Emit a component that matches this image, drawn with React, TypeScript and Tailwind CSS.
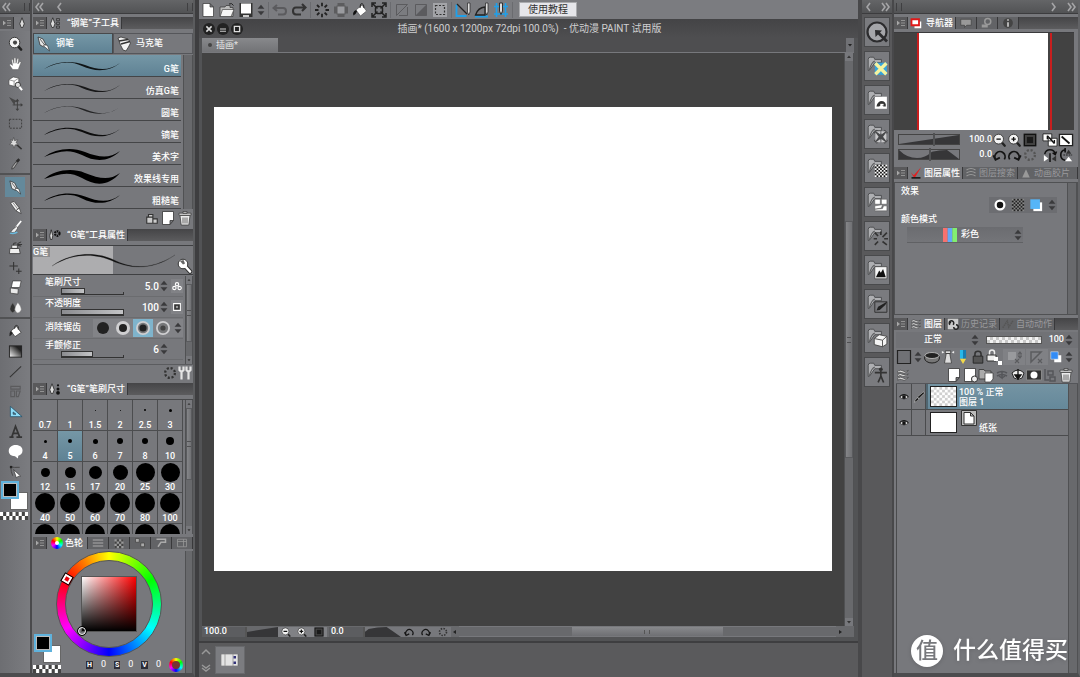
import React, { useState } from 'react';
import clsx from 'clsx';

type Kids = { children?: React.ReactNode };

const Svg: React.FC<Kids & { className?: string; box?: string; stretch?: boolean }> = ({ children, className = 'w-4 h-4', box = '0 0 16 16', stretch }) => (
  <svg viewBox={box} className={clsx('block shrink-0', className)} preserveAspectRatio={stretch ? 'none' : undefined} fill="none" aria-hidden="true">
    {children}
  </svg>
);

const Checks: React.FC<{ x: number; y: number; cols: number; rows: number; s: number; a?: string; b?: string }> = ({ x, y, cols, rows, s, a = '#fff', b = '#333' }) => (
  <>
    <rect x={x} y={y} width={cols * s} height={rows * s} fill={a} />
    {Array.from({ length: cols * rows }, (_, i) => i)
      .filter((i) => ((i % cols) + Math.floor(i / cols)) % 2 === 1)
      .map((i) => (
        <rect key={i} x={x + (i % cols) * s} y={y + Math.floor(i / cols) * s} width={s} height={s} fill={b} />
      ))}
  </>
);

const trash = (
  <>
    <path d="M3 5.5h10l-1.2 9.5H4.2z" fill="#ececec" stroke="#333" strokeWidth=".7" />
    <path d="M6 7.5v6M8 7.5v6M10 7.5v6" stroke="#444" strokeWidth=".8" />
    <path d="M2 3.2h12v2H2zM6 1.5h4v1.8H6z" fill="#eee" stroke="#333" strokeWidth=".7" />
  </>
);
const page = <path d="M2.5 1.5h11v9l-3.5 4H2.5z M13.5 10.5H10v4" fill="#fff" stroke="#333" strokeWidth=".8" />;
const pen = (
  <>
    <path d="M2 1l5 2 3 6-2 2-4-2z" fill="#e8e8e8" stroke="#333" strokeWidth=".8" />
    <path d="M8.5 8.5l3 1 2 5.5-4-3.5-2-1.5z" fill="#fff" stroke="#333" strokeWidth=".7" />
    <path d="M4 3l5 6.5" stroke="#444" strokeWidth=".8" />
  </>
);
const magnifier = (inner: React.ReactNode) => (
  <>
    <path d="M10 10l4 4.5" stroke="#222" strokeWidth="2.6" strokeLinecap="round" />
    <circle cx="7" cy="7" r="5.6" fill="#f3f3f3" stroke="#333" strokeWidth="1" />
    {inner}
  </>
);
const gear = (c: string) => <circle cx="8" cy="8" r="5.6" stroke={c} strokeWidth="2.6" strokeDasharray="2.4 2" />;
const rotL = <path d="M4 13.5A5.800 5.800 0 1 1 13.500 13M.8 8.500l2.600 5 5-2.500" stroke="#151515" strokeWidth="2" />;
const rotR = <path d="M12 13.500A5.800 5.800 0 1 0 2.500 13M15.200 8.500l-2.600 5-5-2.500" stroke="#151515" strokeWidth="2" />;
const stack = (
  <path d="M2 3.5q3-2 6 0t6-.8l-2 2.4q-3 1.5-5.500 0T2 6zM2 7.500q3-2 6 0t6-.8l-2 2.4q-3 1.500-5.500 0T2 10zM2 11.500q3-2 6 0t6-.8l-2 2.400q-3 1.500-5.500 0T2 14z" fill="#f0f0f0" stroke="#333" strokeWidth=".7" />
);
const fitBox = (
  <>
    <rect x="1.500" y="1.500" width="13" height="13" fill="#444" stroke="#111" strokeWidth="1.600" />
    <rect x="4.500" y="4.500" width="7" height="7" fill="#1a1a1a" />
  </>
);
const upDown = <path d="M8 2l4 4.500H4zM8 14l4-4.500H4z" fill="#3a3a3c" />;

const toolGroups: [string, React.ReactNode][][] = [
  [
    ['放大镜', magnifier(<circle cx="7.500" cy="7" r="2.200" fill="#444" />)],
    ['移动', <path d="M5 14.500L1.500 9.500l1.300-1 2 1.500-1-6.200 1.500-.3 1 4.300.2-6h1.700l.3 5.900 1.500-5.200 1.500.4-1 5.500 2.200-2.600 1.300.8-2.400 6-.6 1.900z" fill="#fff" stroke="#555" strokeWidth=".5" />],
    ['操作', <><path d="M1 4l4.500-3 6 1.200v6L6.500 11 1 9.500z" fill="#fff" stroke="#444" strokeWidth=".7" /><path d="M1 4l5.500 1.500V11M6.500 5.500l5-3.200" stroke="#666" strokeWidth=".7" /><circle cx="10.500" cy="9.500" r="2.800" fill="#ddd" stroke="#333" /><path d="M12 11.500l3 3.500" stroke="#fff" strokeWidth="2.200" /></>],
    ['移动图层', <><path d="M1 1l6 9 .6-3.600L11 6z" fill="#484848" /><path d="M10 4.500v10M5 9.500h10" stroke="#3f3f3f" /><path d="M10 3l2 2.500H8zM10 16l2-2.500H8zM16 9.500L13.500 7.500v4z" fill="#3f3f3f" /></>],
    ['选择范围', <rect x="1.500" y="3.500" width="13" height="9.500" stroke="#3c3c3c" strokeDasharray="2 1.300" />],
    ['自动选择', <><path d="M8.500 8.500l6 5.500" stroke="#333" strokeWidth="1.600" /><path d="M6 1.500l1 3.500 3.500-1-2 3 2.500 2-3.500.5L6.500 13 5.200 9.500 1.500 9 4 6.800 2.500 4 5 5z" fill="#dcdcdc" stroke="#444" strokeWidth=".6" /></>],
    ['吸管', <><path d="M11 2.500l2 1.700-2.500 3-2.300-2z" fill="#2c2c2c" /><path d="M8.600 6L4.500 11.500 4 14l2.400-1.200L10 7.300z" fill="#aaa" stroke="#333" strokeWidth=".8" /></>],
  ],
  [
    ['钢笔', pen],
    ['铅笔', <><path d="M2.500 3l4-1.500 5.500 7-3.500 3z" fill="#eee" stroke="#333" strokeWidth=".7" /><path d="M8.500 11.500l3.500-3 2 6z" fill="#fff" stroke="#333" strokeWidth=".7" /><path d="M5 2.500l5.500 7.300" stroke="#888" /></>],
    ['毛笔', <><path d="M14 1L8 8.500" stroke="#fff" strokeWidth="1.800" /><path d="M9 7l1.500 1.500L7.500 13l-5 .5L5 10z" fill="#f2f2f2" stroke="#333" strokeWidth=".6" /><path d="M2 14q5 1 8-1" stroke="#69b9dd" strokeWidth="1.600" /></>],
    ['喷枪', <><path d="M2 9h10l1 5.500H1.500zM4 5.500h6V9H4z" fill="#efefef" stroke="#333" strokeWidth=".8" /><path d="M6 5.500V3.500l3-.5M10 4l4-2M10 5.500l4 1M10 4.800h5" stroke="#333" /></>],
    ['花纹', <path d="M6 2v9M1.500 6.500h9M11.500 9v6M8.500 12h6" stroke="#333" strokeWidth="1.100" />],
    ['橡皮擦', <><path d="M5 1h9l-1.500 7H3.500z" fill="#fff" stroke="#333" strokeWidth=".7" /><path d="M2.500 8.500l8.500 1-.5 5.500-8-1z" fill="#e9e9e9" stroke="#333" strokeWidth=".7" /></>],
    ['混合', <><path d="M5 3q6 8 0 10.500Q-1 11 5 3z" fill="#333" stroke="#777" strokeWidth=".5" /><path d="M10.500 2.500q7.500 9 0 11.500Q4 11.500 10.500 2.500z" fill="#f5f5f5" stroke="#555" strokeWidth=".5" /></>],
  ],
  [
    ['填充', <><path d="M3 7.500l6-5 5 6.500-6.500 4.500z" fill="#fff" stroke="#333" strokeWidth=".8" /><path d="M3 7.500q-2 2-1.500 5.500Q4 12 5 9.500z" fill="#222" /><path d="M7 5q0-4 2.500-3.500T11 6" stroke="#333" /></>],
    ['渐变', <><defs><linearGradient id="toolGradient" x1="0" y1="1" x2="1" y2="0"><stop stopColor="#fff" /><stop offset=".75" stopColor="#222" /></linearGradient></defs><rect x="1.500" y="2" width="13" height="12" fill="url(#toolGradient)" stroke="#222" /></>],
    ['直线', <path d="M2 14L14 2.500" stroke="#333" strokeWidth="1.100" />],
    ['分格', <path d="M3 2.500h10v3H3zM3 7.500h4v6H3zM9 7.500h4l-2 6H9z" stroke="#5b5b5d" strokeWidth="1.200" />],
    ['尺子', <path d="M2.500 2.500v11h12.500zM5.500 8.500v2.400h3z" fill="#8fdcf7" stroke="#1f4b63" strokeWidth=".8" fillRule="evenodd" />],
    ['文字', <path d="M1.500 14h4.500M9 14h6M4 14L8 2.500 12.500 14M5.500 10h5" stroke="#353535" strokeWidth="1.800" />],
    ['对话框', <path d="M8 1c5 0 7.500 2.500 7.500 6 0 3-2 4.800-4.500 5.400l-.5 3.100L7.500 13C3 13 .8 10.500.8 7.500.8 3.500 4 1 8 1z" fill="#fff" />],
    ['线修正', <><path d="M3 3q3 1 9.500.5M3 3q0 5 2 9.500" stroke="#444" /><path d="M6 6l7.500 7-3 .2L9 15z" fill="#fff" stroke="#333" strokeWidth=".7" /><path d="M2 2h2.500v2.500H2z" fill="#222" /></>],
  ],
];

const arrowsX = <path d="M2 2l4.500 4.500M14 2L9.500 6.500M2 14l4.500-4.500M14 14L9.500 9.500M1 5V1h4M11 1h4v4M1 11v4h4M15 11v4h-4" stroke="#222" strokeWidth="1.500" />;
const topGroups: [string, React.ReactNode][][] = [
  [
    ['新建', <path d="M3 1.500h7l3.500 3.500v9.500H3zM10 1.500V5h3.500" fill="#fff" stroke="#333" strokeWidth=".7" />],
    ['打开', <><path d="M1 5h5l1-1.500h4v2h3v9H1z" fill="#bbb" stroke="#333" strokeWidth=".7" /><path d="M3.500 7.500H15l-3 7H1.200z" fill="#f5f5f5" stroke="#333" strokeWidth=".6" /><path d="M10 2q3-1.500 4.500 1.500" stroke="#222" /></>],
    ['保存', <><path d="M1.500 1h13v14h-13z" fill="#333" /><path d="M3 1.500h10v10H3z" fill="#fff" /><path d="M5 13h6v2H5z" fill="#ccc" /></>],
  ],
  [
    ['撤消', <path d="M5 3L1.500 6 5 9M2 6h9q3 0 3 3.200T11 12.500H6" stroke="#5b5b5e" strokeWidth="2" />],
    ['重做', <path d="M11 2L14.500 5.500 11 9M14 5.500H5Q2 5.500 2 9t3 3.500h5" stroke="#333" strokeWidth="2.100" />],
  ],
  [
    ['清除', <path d="M8 .8v3.500M8 11.800v3.500M1 8h3.500M11.500 8H15M3 3l2.400 2.400M13 3l-2.400 2.400M3 13l2.400-2.400M13 13l-2.400-2.400" stroke="#222" strokeWidth="1.800" />],
    ['清除选择范围外', <><path d="M8 1v14M1 8h14" stroke="#5c5c5e" strokeWidth="7" /><rect x="4" y="4" width="8" height="8" fill="#9a9b9f" stroke="#5c5c5e" /></>],
    ['填充', <><path d="M4 8l6-5 4.500 6-6 5z" fill="#fff" stroke="#444" strokeWidth=".6" /><path d="M4 8Q0 10 1.500 13.500 4 12 5 9.500z" fill="#111" /><path d="M8 6q0-5 2-4.500T12 6" stroke="#222" /></>],
    ['放大缩小旋转', <><rect x="4.500" y="4.500" width="7" height="7" rx="2" stroke="#222" strokeWidth="1.500" fill="#7b7c80" />{arrowsX}</>],
  ],
  [
    ['取消选择', <path d="M2.500 13.500v-11h11M13.500 5v8.500H5M13.500 2.500l-11 11" stroke="#5b5b5e" />],
    ['反转选择', <><path d="M13.500 2.500v11h-11z" fill="#5b5b5e" /><path d="M2.500 2.500h11v11h-11z" stroke="#5b5b5e" /></>],
    ['选择边界', <><path d="M1 1h14v14H1z" fill="#a3a4a8" /><path d="M3.500 3.500h9v9h-9z" stroke="#333" strokeDasharray="2 1.500" strokeWidth="1.200" /></>],
  ],
  [
    ['吸附尺子', <><path d="M1.500 2.500V14h10" stroke="#1fa0ea" strokeWidth="1.800" /><path d="M2 2l10 10" stroke="#222" strokeWidth="1.300" /><path d="M12.500 1h2.500v9l-1.300 3-1.200-3z" fill="#ddd" stroke="#222" strokeWidth=".7" /></>],
    ['吸附特殊尺子', <><path d="M1 13.500h13V15.500H1z" fill="#1fa0ea" /><path d="M1.500 13Q4 5.500 11 5v8z" stroke="#222" strokeWidth="1.300" /><path d="M11.500 1H14v9l-1.300 3-1.200-3z" fill="#ddd" stroke="#222" strokeWidth=".7" /></>],
    ['吸附网格', <><path d="M3.500 1v14M12.500 1v14M1 4.500h14M1 12h14" stroke="#1fa0ea" strokeWidth="1.600" /><path d="M6.500 1h3v8L8 12.500 6.500 9z" fill="#ddd" stroke="#222" strokeWidth=".9" /></>],
  ],
];

const materials: [string, React.ReactNode][] = [
  ['彩色图案', <><path d="M8 7h11v11H8z" fill="#35a4dc" /><path d="M8.500 7.500l10 10M18.500 7.500l-10 10" stroke="#f4f3a0" strokeWidth="3" /></>],
  ['单色图案', <><path d="M8 7h11v11H8z" fill="#fff" /><path d="M9.500 16q1-5 5-5 4 .5 3.500 5h-2l-2-2-2 2z" fill="#333" /><path d="M13 13.500h3v1.500h-3z" fill="#fff" /></>],
  ['网点', <><path d="M8.500 7.500l10 10M18.500 7.500l-10 10" stroke="#48494b" strokeWidth="4" /><path d="M9 7.500h4v3zM14 7.500h4l-4 3zM9 17.500h4v-3zM14 17.500h4l-4-3zM8.500 8.500l3 4-3 4zM18.500 8.500l-3 4 3 4z" fill="#c9c9cb" /></>],
  ['网纸', <Checks x={8} y={7} cols={7} rows={7} s={1.6} b="#111" />],
  ['漫画素材', <path d="M8 7.500h5v4.500H8zM14 7.500h5V12h-5zM8 13.500l7-1-1 3-6 1zM16 13.500h3v4.500H8v-1.500l7-.5z" fill="#fff" stroke="#444" strokeWidth=".4" />],
  ['特效线', <path d="M8 7l3 3M19 7l-4 4M13.500 6v3M8 18l3-3M19 18l-4-3M7 12.500h3M20 12.500h-3.500" stroke="#333" strokeWidth="1.500" />],
  ['图像素材', <><path d="M8 7h11v11H8z" fill="#f5f5f5" stroke="#333" strokeWidth=".6" /><path d="M9 16.500l3-6 1.500 2L15.500 9l2.500 7.500z" fill="#111" /></>],
  ['画笔素材', <><path d="M8 8h11v9.500H8z" stroke="#333" strokeWidth=".9" /><path d="M9.500 16l1.500-3.500L17 9l2.500-1.500L17.500 11l-5 4.500z" fill="#222" /></>],
  ['立体素材', <path d="M7.500 10.500L12 7l7 1.500v7L15 18l-7.500-2zM7.500 10.500L15 12v6M15 12l4-3.500" fill="#f3f3f3" stroke="#444" strokeWidth=".8" />],
  ['姿势素材', <><path d="M8 10.500h11M13.500 9v5l-2.500 5.500M13.500 13.500L16 19.500" stroke="#333" strokeWidth="1.500" /><circle cx="13.500" cy="7.500" r="1.700" fill="#333" /></>],
];

const brushes: [string, number, number][] = [
  ['G笔', 1, 0.85],
  ['仿真G笔', 0.9, 0.8],
  ['圆笔', 0.4, 0.7],
  ['镝笔', 1.2, 0.9],
  ['美术字', 3.2, 1],
  ['效果线专用', 5.2, 1],
  ['粗糙笔', 1.8, 1],
];

// label, dot diameter; the last row only peeks in, so it has no visible label
const sizes: [string, number][] = [
  ['0.7', 0], ['1', 0], ['1.5', 1], ['2', 1], ['2.5', 2], ['3', 3],
  ['4', 3], ['5', 4], ['6', 5], ['7', 6], ['8', 6], ['10', 8],
  ['12', 9], ['15', 11], ['17', 13], ['20', 15], ['25', 19], ['30', 19],
  ['40', 20], ['50', 20], ['60', 20], ['70', 20], ['80', 20], ['100', 20],
];
const moreSizes = ['120', '150', '170', '200', '250', '300'];

const Chevrons: React.FC<{ d: 'l' | 'll' | 'r' | 'rr'; label: string }> = ({ d, label }) => (
  <button aria-label={label} className="flex w-3 items-center justify-center">
    <Svg className="h-2.5 w-2.5" box="0 0 10 10">
      <path
        d={{ l: 'M7 1L4 5l3 4', ll: 'M5 1L2 5l3 4M9 1L6 5l3 4', r: 'M3 1l3 4-3 4', rr: 'M1 1l3 4-3 4M5 1l3 4-3 4' }[d]}
        stroke="#a5a5a7"
        strokeWidth="1.600"
      />
    </Svg>
  </button>
);

const Grip = () => <span className="h-2 w-1.5 border-x border-[#3f3f41]" />;

const DockHead: React.FC<Kids> = ({ children }) => (
  <div className="flex h-3.5 shrink-0 items-center border-b border-[#3c3c3e] bg-linear-to-b from-[#646567] to-[#525355]">{children}</div>
);

const TabBar: React.FC<Kids> = ({ children }) => (
  <div className="mt-[3px] flex h-[14px] shrink-0 overflow-hidden border-b-2 border-[#77787c] bg-linear-to-b from-[#454547] to-[#5c5c5e]">
    <button aria-label="面板菜单" className="flex w-3.5 shrink-0 items-center justify-center border-r border-[#39393b] bg-[#59595b]">
      <Svg className="h-2 w-2" box="0 0 8 8"><path d="M0 2l2.500 2L0 6zM4 1.500h4M4 4h4M4 6.500h4" fill="#aaa" stroke="#aaa" strokeWidth=".7" /></Svg>
    </button>
    {children}
  </div>
);

const Tab: React.FC<{ label?: string; on?: boolean; icon: React.ReactNode; className?: string; name?: string }> = ({ label, on, icon, className, name }) => (
  <button
    aria-label={label ?? name}
    className={clsx('flex shrink-0 items-center gap-0.5 whitespace-nowrap border-r border-[#39393b] px-0.5 text-[9px] leading-[12px]', on ? 'bg-[#77787c] font-medium text-white' : 'bg-[#626366] text-[#99999c]', className)}
  >
    <Svg className="h-3 w-3">{icon}</Svg>
    {label}
  </button>
);

const Spin: React.FC<{ label: string }> = ({ label }) => (
  <button aria-label={label} className="shrink-0"><Svg className="h-3 w-2.5" box="3 1 10 14">{upDown}</Svg></button>
);

const IconBtn: React.FC<{ label: string; className?: string; size?: string; children: React.ReactNode }> = ({ label, className, size, children }) => (
  <button aria-label={label} className={clsx('flex shrink-0 items-center justify-center', className)}>
    <Svg className={size}>{children}</Svg>
  </button>
);

// drawing below, invisible native range on top
const Slider: React.FC<Kids & { label: string; value: number; className?: string }> = ({ label, value, className, children }) => (
  <div className={clsx('relative shrink-0', className)}>
    {children}
    <input type="range" aria-label={label} defaultValue={value} className="absolute inset-0 m-0 h-full w-full opacity-0" />
  </div>
);

const FillSlider: React.FC<{ label: string; value: number }> = ({ label, value }) => (
  <Slider label={label} value={value} className="h-[7px] w-[63px] border-b border-[#333]">
    <div className="h-full border border-[#333] bg-linear-to-r from-[#8b8c90] to-[#c3c4c6]" style={{ width: `${value}%` }} />
    <span className="absolute right-0 bottom-0 h-0.5 w-px bg-[#333]" />
  </Slider>
);

const Wedge: React.FC<{ rotate?: boolean; part?: 'l' | 'r' }> = ({ rotate, part }) => (
  <Svg className="h-full w-full" box={part === 'l' ? '0 0 30 10' : part === 'r' ? '30 0 30 10' : '0 0 60 10'} stretch>
    {rotate ? <path d="M0 10V0Q8 9 18 9 26 9 33 2 40 0 48 0 53 4 60 10z" fill="#363638" /> : <path d="M0 10L60 0v10z" fill="#363638" />}
  </Svg>
);

const VBar: React.FC<{ className?: string; thumb?: string; arrows?: boolean }> = ({ className, thumb, arrows }) => (
  <div className={clsx('flex shrink-0 flex-col border-x border-[#505153] bg-[#68696c]', className)}>
    {arrows && <Svg className="h-2 w-full bg-[#77787c]" box="0 0 8 8"><path d="M4 2.500L6 5H2z" fill="#333" /></Svg>}
    {thumb && <div className={clsx('flex items-center justify-center border border-[#5a5b5e] bg-linear-to-r from-[#858689] to-[#707174]', thumb)}><span className="h-1.5 w-1 border-y border-[#505052]" /></div>}
    <span className="flex-1" />
    {arrows && <Svg className="h-2 w-full bg-[#77787c]" box="0 0 8 8"><path d="M4 5.500L6 3H2z" fill="#333" /></Svg>}
  </div>
);

const Swatches = () => (
  <div className="flex w-[30px] flex-col">
    <div className="relative h-[29px]">
      <button aria-label="背景色" className="absolute right-0.5 bottom-0 h-[18px] w-[18px] border border-[#666] bg-white" />
      <button aria-label="前景色" className="absolute top-0 left-px h-[18px] w-[18px] border-2 border-[#5fb2dc] bg-black outline-1 -outline-offset-3 outline-[#bbb]" />
    </div>
    <button aria-label="透明色" className="mt-0.5">
      <Svg className="h-2 w-7" box="0 0 27 6" stretch><Checks x={0} y={0} cols={9} rows={2} s={3} b="#444" /></Svg>
    </button>
  </div>
);

const strokePath = (t: number) =>
  `M11 13C22 ${6 - t / 3} 38 ${4 - t / 2} 52 ${9.5 - t / 2}S76 15 87 7C76 ${15 + t} 62 ${15 + t} 49 ${9.5 + t / 2}S24 ${6 + t / 2} 11 13z`;

const ToolColumn = () => {
  const [active, setActive] = useState('钢笔1');
  return (
    <nav aria-label="工具" className="flex w-8 shrink-0 flex-col border-r-2 border-b-4 border-r-[#4a4a4c] border-b-[#4c4c4e] bg-linear-to-r from-[#6d6e72] to-[#7b7c80]">
      <DockHead><Chevrons d="ll" label="折叠工具" /><span className="flex-1" /><Grip /></DockHead>
      <TabBar><Tab on name="工具" icon={<path d="M8 1l3 8-2 5H7L5 9z" fill="#ddd" stroke="#222" />} /></TabBar>
      {toolGroups.map((group, g) => (
        <div key={g} className={clsx('flex flex-col items-center pt-0.5', g > 0 && 'border-t-2 border-[#515254]')}>
          {group.map(([name, icon]) => (
            <button
              key={name}
              aria-label={name}
              onClick={() => setActive(name + g)}
              className={clsx('flex h-5 w-5 items-center justify-center', active === name + g && 'bg-[#64899b]')}
            >
              <Svg className="h-[15px] w-[15px]">{icon}</Svg>
            </button>
          ))}
        </div>
      ))}
      <Swatches />
    </nav>
  );
};

const SubTools = () => {
  const [brush, setBrush] = useState(0);
  return (
    <section className="pt-0.5">
      <div className="flex h-[21px] text-[9px] font-medium text-white">
        <button className="flex flex-1 items-center gap-1 border border-[#48494b] bg-linear-to-b from-[#7597a6] to-[#5f8294] px-0.5"><Svg>{pen}</Svg>钢笔</button>
        <button className="flex flex-1 items-center gap-1 border border-[#55565a] px-0.5">
          <Svg><path d="M2 2l3-1 7 2 2.500 4-2 4-2.500 4-3-1-2.500-5z" fill="#f2f2f2" stroke="#333" strokeWidth=".8" /><path d="M3 5l9-1.500M5 8l9-2.500" stroke="#333" strokeWidth="1.500" /></Svg>马克笔
        </button>
      </div>
      <div className="mt-px flex h-[154px]">
        <ul className="grid flex-1 grid-rows-7">
          {brushes.map(([name, t, o], i) => (
            <li key={name} className="flex">
              <button
                onClick={() => setBrush(i)}
                className={clsx('flex flex-1 items-end justify-between border-b border-[#444547] pr-0.5 text-[9px] leading-[13px] font-medium text-white', brush === i && 'bg-linear-to-b from-[#7597a6] to-[#5f8294]')}
              >
                <Svg className="h-5 w-24" box="0 0 96 20"><path d={strokePath(t)} fill="#000" opacity={o} /></Svg>
                <span className="whitespace-nowrap">{name}</span>
              </button>
            </li>
          ))}
        </ul>
        <VBar className="ml-0.5 w-2.5" />
      </div>
      <div className="flex h-[17px] items-center justify-end gap-px">
        <IconBtn label="添加子工具" size="w-3.5 h-3.5"><path d="M2 7h7v7H2zM9 9h5v5H9zM4 7V4h5v3" stroke="#333" strokeWidth="1.300" fill="#ccc" /></IconBtn>
        <IconBtn label="复制子工具">{page}</IconBtn>
        <IconBtn label="删除子工具">{trash}</IconBtn>
      </div>
    </section>
  );
};

const PropRow: React.FC<Kids & { label: string; value?: number; num?: string }> = ({ label, value, num, children }) => (
  <div className="flex h-[21px] items-center border-b border-[#6b6c6f] pl-3 text-white">
    {value !== undefined ? (
      <>
        <div className="w-20">
          <span className="block text-[9px] leading-[11px] font-medium">{label}</span>
          <div className="pl-4"><FillSlider label={label} value={value} /></div>
        </div>
        <span className="flex-1 text-right text-[10px] font-medium">{num}</span>
        <Spin label={`${label}增减`} />
      </>
    ) : (
      <span className="text-[9px] font-medium">{label}</span>
    )}
    {children}
  </div>
);

const ToolProperty = () => (
  <section>
    <div className="mt-0.5 flex h-[30px] border-y border-[#3f4042] bg-linear-to-r from-[#adadaf] from-50% to-[#77787c] to-50%">
      <span className="w-0 text-[9px] leading-[12px] font-medium whitespace-nowrap text-white">
        <span className="bg-[#8b8c8e] pr-0.5">G笔</span>
      </span>
      <Svg className="h-full flex-1" box="0 0 142 28">
        <path d="M18 20C40 4 66 7 80 14S115 26 141 9C115 27 92 21 78 14.800S42 5 18 20z" fill="#111" stroke="#222" strokeWidth=".2" />
      </Svg>
      <IconBtn label="工具详细" className="self-end" size="w-4 h-4"><path d="M8 8l5 5.500" stroke="#333" strokeWidth="4.500" strokeLinecap="round" /><circle cx="6" cy="6" r="4.800" fill="#fff" stroke="#333" /><path d="M8 8l5 5.500" stroke="#fff" strokeWidth="2.600" strokeLinecap="round" /><path d="M3 3l3 3.500 2-1L6.500 2" fill="#666" /></IconBtn>
    </div>
    <div className="flex h-[89px] pt-px">
      <div className="flex-1 overflow-hidden">
        <PropRow label="笔刷尺寸" value={38} num="5.0">
          <IconBtn label="笔刷尺寸动态" className="ml-0.5 bg-[#818286]" size="w-3 h-3.5"><path d="M8 3.500a2.200 2.200 0 1 1 0 4.400 2.200 2.200 0 0 1 0-4.400zM4.500 8.500a2.200 2.200 0 1 1 0 4.400 2.200 2.200 0 0 1 0-4.400zM11.500 8.500a2.200 2.200 0 1 1 0 4.400 2.200 2.200 0 0 1 0-4.400z" stroke="#fff" strokeWidth="1.500" /></IconBtn>
        </PropRow>
        <PropRow label="不透明度" value={100} num="100">
          <IconBtn label="不透明度动态" className="ml-0.5 bg-[#818286]" size="w-3 h-3.5"><path d="M3.500 3.500h9v9h-9z" fill="#333" stroke="#fff" strokeWidth="1.400" /><path d="M6.500 6.500h3v3h-3z" fill="#999" /></IconBtn>
        </PropRow>
        <PropRow label="消除锯齿">
          <div className="ml-auto flex h-[18px] items-center bg-[#828387]">
            {['无', '弱', '中', '强'].map((n, i) => (
              <button key={n} aria-label={n} className={clsx('flex h-full w-5 items-center justify-center', i === 2 && 'bg-[#7fb4cc]')}>
                <Svg className="h-4 w-4">
                  {i > 0 && <circle cx="8" cy="8" r="7" fill="#cfcfd1" />}
                  {i > 1 && <circle cx="8" cy="8" r="5.200" fill="#77787a" />}
                  <circle cx="8" cy="8" r={[6, 4, 3.6, 2.6][i]} fill={i === 3 ? '#444' : '#222'} />
                </Svg>
              </button>
            ))}
            <Spin label="消除锯齿切换" />
          </div>
        </PropRow>
        <PropRow label="手颤修正" value={50} num="6"><span className="w-3.5" /></PropRow>
      </div>
      <VBar className="ml-0.5 w-2" arrows thumb="h-[58px]" />
    </div>
    <div className="flex h-4 items-center justify-end border-t border-[#5b5c5f]">
      <IconBtn label="恢复初始设定" size="w-3.5 h-3.5">{gear('#333')}</IconBtn>
      <IconBtn label="显示工具详细" size="w-4 h-4"><path d="M2.500 1.500v3.500L4.500 7v7.500M6.500 1.500v3.500L4.500 7M9.500 1.500v3.500l2 2v7.500M13.500 1.500v3.500l-2 2" stroke="#e4e4e4" strokeWidth="2.200" /></IconBtn>
    </div>
  </section>
);

const BrushSizes = () => {
  const [size, setSize] = useState('5');
  return (
    <section className="mt-0.5 flex h-[135px] border-t border-[#48494b]">
      <div className="grid flex-1 auto-rows-[31px] grid-cols-6 overflow-hidden">
        {sizes.map(([n, r]) => (
          <button
            key={n}
            onClick={() => setSize(n)}
            className={clsx('flex flex-col items-center border-r border-b border-[#4c4d4f]', size === n && 'bg-linear-to-b from-[#7597a6] to-[#5f8294]')}
          >
            <span className="flex h-5 w-full shrink-0 items-center justify-center"><span className="rounded-full bg-black" style={{ width: r, height: r }} /></span>
            <span className="text-[9px] leading-[10px] font-medium text-white">{n}</span>
          </button>
        ))}
        {moreSizes.map((n) => (
          <button key={n} aria-label={n} onClick={() => setSize(n)} className="flex justify-center border-r border-[#4c4d4f]">
            <span className="h-5 w-5 rounded-full bg-black" />
          </button>
        ))}
      </div>
      <VBar className="ml-0.5 w-2" arrows thumb="h-[72px]" />
    </section>
  );
};

const ColorWheel = () => (
  <section className="flex flex-1">
    <div className="relative flex-1">
      <div className="mx-auto flex h-[106px] w-[106px] items-center justify-center rounded-full border border-[#555] bg-[conic-gradient(from_300deg,red,yellow,lime,cyan,blue,magenta,red)]">
        <div className="flex h-[88px] w-[88px] items-center justify-center rounded-full border border-[#555] bg-[#77787c]">
          <div className="h-14 w-14 border border-[#555] bg-[linear-gradient(to_top,#000,transparent),linear-gradient(to_right,#fff,red)]" />
        </div>
      </div>
      <span className="absolute top-[24px] left-[30px] h-2 w-2 rotate-30 border-2 border-white bg-red-600 outline-1 outline-black" />
      <span className="absolute top-[76px] left-[45px] h-2 w-2 rounded-full border border-white outline-1 outline-black" />
      <div className="absolute bottom-0 left-0"><Swatches /></div>
      <div className="absolute right-0.5 bottom-px flex items-center gap-2 text-[9px] text-white">
        {['H', 'S', 'V'].map((c) => (
          <span key={c} className="flex items-center gap-2"><b className="bg-[#2d2d38] px-px text-[7px] leading-[8px]">{c}</b>0</span>
        ))}
        <button aria-label="切换色彩空间" className="flex h-3.5 w-3.5 items-center justify-center rounded-full bg-[conic-gradient(from_300deg,red,yellow,lime,cyan,blue,magenta,red)]"><span className="h-2 w-2 rounded-full bg-[#733]" /></button>
      </div>
    </div>
    <VBar className="w-2" />
  </section>
);

const LeftDock = () => (
  <aside className="flex w-[163px] shrink-0 flex-col border-r-2 border-b-4 border-r-[#5b5c5e] border-b-[#4c4c4e] bg-[#77787c] pl-px">
    <DockHead><Chevrons d="ll" label="全部折叠" /><span className="w-2" /><Chevrons d="l" label="折叠" /><span className="flex-1" /><Grip /></DockHead>
    <TabBar><Tab on label="“钢笔”子工具" className="gap-1.5" icon={<><path d="M5 1l3 8-2 5H4L2 9z" fill="#ddd" stroke="#222" /><path d="M10 2h4v3h-4zM10 7h4v3h-4zM10 12h4v3h-4z" stroke="#333" /></>} /></TabBar>
    <SubTools />
    <TabBar><Tab on label="“G笔”工具属性" className="gap-1.5" icon={<><path d="M3 1l2 8-1 5H2L1 9z" fill="#ddd" stroke="#222" /><circle cx="11" cy="6" r="3" stroke="#111" strokeWidth="3" strokeDasharray="2 1" /></>} /></TabBar>
    <ToolProperty />
    <TabBar><Tab on label="“G笔”笔刷尺寸" className="gap-1.5" icon={<><path d="M4 1l3 8-2 5H3L1 9z" fill="#ddd" stroke="#222" /><circle cx="12" cy="3" r="1.500" fill="#111" /><circle cx="12" cy="8" r="2" fill="#111" /><circle cx="12" cy="13" r="2.500" fill="#111" /></>} /></TabBar>
    <BrushSizes />
    <TabBar>
      <button className="flex shrink-0 items-center gap-0.5 border-r border-[#39393b] bg-[#77787c] px-1 text-[9px] leading-[12px] font-medium whitespace-nowrap text-white">
        <span className="flex h-3 w-3 items-center justify-center rounded-full bg-[conic-gradient(from_300deg,red,yellow,lime,cyan,blue,magenta,red)]"><span className="h-1 w-1 rounded-full bg-white" /></span>
        色轮
      </button>
      <Tab className="flex-1 justify-center" name="颜色滑块" icon={<path d="M1 4h14M1 8h14M1 12h14" stroke="#aaa" strokeWidth="1.500" />} />
      <Tab className="flex-1 justify-center" name="颜色设置" icon={<Checks x={2} y={3} cols={4} rows={4} s={3} a="#999" b="#444" />} />
      <Tab className="flex-1 justify-center" name="中间色" icon={<path d="M2 2h5v5H2zM9 8h5v5H9z" fill="#aaa" stroke="#444" />} />
      <Tab className="flex-1 justify-center" name="近似色" icon={<path d="M2 3h12v4H8l-4 6" stroke="#aaa" strokeWidth="2" />} />
      <Tab className="flex-1 justify-center" name="颜色历史" icon={<path d="M2 3h12v10H2zM10 3v10M2 6h12" stroke="#999" />} />
    </TabBar>
    <ColorWheel />
  </aside>
);

const Sep = () => <span className="mx-[2px] h-4 w-px shrink-0 bg-[#6a6b6f]" />;

const Center = () => (
  <main className="flex min-w-0 flex-1 flex-col border-l-4 border-[#3e3e40] bg-[#525355]">
    <header className="flex h-[19px] shrink-0 items-center bg-[#7b7c80]">
      {topGroups.map((group, g) => (
        <React.Fragment key={g}>
          {g > 0 && <Sep />}
          <div className="flex gap-px">
            {group.map(([name, icon]) => <IconBtn key={name} label={name} className="w-[18px]">{icon}</IconBtn>)}
            {g === 0 && <Spin label="更多" />}
          </div>
        </React.Fragment>
      ))}
      <Sep />
      <button className="ml-1 h-[15px] w-[58px] border border-[#aaabae] bg-[#e6e6ea] text-[10px] leading-[13px] text-[#333]">使用教程</button>
    </header>
    <div className="flex h-[19px] shrink-0 items-center gap-0.5 bg-linear-to-b from-[#444446] to-[#4e4e50] px-1">
      <IconBtn label="关闭" size="w-3 h-3"><circle cx="8" cy="8" r="8" fill="#222" /><path d="M4.500 4.500l7 7M11.500 4.500l-7 7" stroke="#ddd" strokeWidth="2" /></IconBtn>
      <IconBtn label="最小化" size="w-3 h-3"><circle cx="8" cy="8" r="8" fill="#222" /><path d="M4 8h8M4 11h8" stroke="#ccc" strokeWidth="1.500" /></IconBtn>
      <IconBtn label="最大化" size="w-3 h-3"><circle cx="8" cy="8" r="8" fill="#222" /><path d="M4.500 4.500h7v7h-7z" stroke="#ddd" strokeWidth="1.800" /></IconBtn>
      <h1 className="flex-1 pr-10 text-center text-[10px] font-normal whitespace-pre text-[#cfcfd0]">插画* (1600 x 1200px 72dpi 100.0%)  - 优动漫 PAINT 试用版</h1>
    </div>
    <div className="flex min-h-0 flex-1 flex-col pr-1 pl-[3px]">
      <div className="flex h-[15px] shrink-0 justify-between border-b border-[#77787c] bg-[#4e4e50]">
        <button className="flex w-[76px] items-center gap-1 bg-linear-to-b from-[#88898c] to-[#727376] px-1.5 text-[9px] leading-[13px] text-[#e4e4e4]">
          <span className="h-1 w-1 rounded-full bg-[#444]" />插画*
        </button>
        <button aria-label="标签列表" className="w-2 bg-[#707175]"><Svg className="h-2 w-2" box="0 0 8 8"><path d="M4 5.500L6 3H2z" fill="#222" /></Svg></button>
      </div>
      <div className="flex min-h-0 flex-1">
        <div className="flex min-w-0 flex-1 bg-[#424242] pt-[54px] pr-3 pb-[55px] pl-3">
          <div className="flex-1 bg-white" aria-label="画布" />
        </div>
        <VBar className="w-2.5" arrows thumb="h-full my-40" />
      </div>
      <div className="flex h-[11px] shrink-0 items-center bg-[#68696c] text-[9px] leading-[11px] font-medium text-white">
        <div className="flex h-2.5 w-[45px] items-center border-r-2 border-[#555] bg-[#5c5d60] pl-0.5">100.0</div>
        <Slider label="缩放" value={50} className="h-2.5 w-[31px] bg-[#68696c]"><Wedge part="r" /></Slider>
        <div className="flex w-[49px] justify-around bg-[#808185]">
          <IconBtn label="缩小" size="w-2.5 h-2.5">{magnifier(<path d="M4 7h6" stroke="#111" strokeWidth="2" />)}</IconBtn>
          <IconBtn label="放大" size="w-2.5 h-2.5">{magnifier(<path d="M4 7h6M7 4v6" stroke="#111" strokeWidth="2" />)}</IconBtn>
          <IconBtn label="适合" size="w-2.5 h-2.5">{fitBox}</IconBtn>
        </div>
        <div className="ml-0.5 flex h-2.5 w-[36px] items-center border-r-2 border-[#555] bg-[#5c5d60] pl-0.5">0.0</div>
        <Slider label="旋转" value={50} className="h-2.5 w-9 bg-[#77787c]"><Wedge rotate part="r" /></Slider>
        <div className="flex w-[50px] justify-around bg-[#77787c]">
          <IconBtn label="左旋转" size="w-2.5 h-2.5">{rotL}</IconBtn>
          <IconBtn label="右旋转" size="w-2.5 h-2.5">{rotR}</IconBtn>
          <IconBtn label="重置旋转" size="w-2.5 h-2.5">{gear('#333')}</IconBtn>
        </div>
        <Svg className="h-2 w-2" box="0 0 8 8"><path d="M2 4l3-2v4z" fill="#222" /></Svg>
        <div className="flex h-full flex-1 justify-center border-y border-[#77787c]">
          <div className="flex h-full w-2/5 items-center justify-center bg-linear-to-b from-[#88898c] to-[#6e6f73]"><span className="h-1 w-1.5 border-x border-[#555]" /></div>
        </div>
        <Svg className="h-2 w-2" box="0 0 8 8"><path d="M6 4L3 2v4z" fill="#222" /></Svg>
        <span className="w-2.5" />
      </div>
    </div>
    <footer className="mt-1 flex h-9 shrink-0 items-center border-t-2 border-[#3e3e40] bg-[#5a5a5c]">
      <div className="flex w-3.5 flex-col items-center gap-2">
        <button aria-label="上"><Svg className="h-2 w-2.5" box="0 0 10 8"><path d="M1 6l4-4 4 4" stroke="#999" strokeWidth="1.500" /></Svg></button>
        <button aria-label="下"><Svg className="h-2 w-2.5" box="0 0 10 8"><path d="M1 1l4 3 4-3M1 4l4 3 4-3" stroke="#999" strokeWidth="1.400" /></Svg></button>
      </div>
      <button aria-label="时间轴" className="ml-0.5 flex h-7 w-[30px] items-center justify-center border border-[#68696c] bg-[#7b7c80]">
        <Svg className="h-3 w-4.5" box="0 0 18 12"><rect width="17" height="12" fill="#e4e4e4" stroke="#555" strokeWidth=".5" /><path d="M4 0v12M12 0v12" stroke="#888" strokeWidth=".7" /><path d="M12.500 2h2.500v2.500h-2.500zM12.500 7.500h2.500V10h-2.500z" fill="#33337a" /></Svg>
      </button>
    </footer>
  </main>
);

const MaterialStrip = () => (
  <nav aria-label="素材" className="flex w-9 shrink-0 flex-col border-r-2 border-l-4 border-[#48484a] bg-[#59595b]">
    <DockHead><Chevrons d="l" label="展开" /><span className="flex-1" /><Chevrons d="rr" label="折叠素材" /></DockHead>
    <div className="flex flex-col items-center gap-1 pt-[3px]">
      <button aria-label="快速访问" className="flex h-[30px] w-[26px] items-center justify-center border border-[#494a4c] bg-[#7a7b7f]">
        <Svg className="h-6 w-6" box="0 0 24 24"><circle cx="12" cy="12" r="9.500" fill="#a5a6aa" stroke="#2c2c2e" strokeWidth="2.200" /><path d="M10 10l7 .5-2 2 8 8-2 2-8-8-2.500 2.500z" fill="#2c2c2e" /></Svg>
      </button>
      {materials.map(([name, icon]) => (
        <button key={name} aria-label={name} className="flex h-[30px] w-[26px] items-center justify-center border border-[#494a4c] bg-[#7a7b7f]">
          <Svg className="h-[22px] w-[22px]" box="0 0 20 20"><path d="M2 4q0-2 2-2h3l1 2h6v3H8l-5 7H2z" fill="#aeafb2" stroke="#48494b" strokeWidth=".8" /><path d="M3 13.500q2-7 5-8" stroke="#5a5b5d" />{icon}</Svg>
        </button>
      ))}
    </div>
  </nav>
);

const Navigator = () => (
  <section>
    <div className="mt-px mr-1 flex h-[98px] justify-center border-t border-[#3a3a3c] bg-[#424242]">
      <div className="flex w-3/4 border-x-2 border-[#c81e1e] pr-0.5"><div className="flex-1 bg-white" /></div>
    </div>
    <div className="flex h-[34px] flex-col justify-around py-0.5 pr-1 pl-1 text-[9px] font-medium text-white">
      <div className="flex items-center">
        <Slider label="导航器缩放" value={58} className="h-[11px] w-[62px] border border-[#444]"><Wedge /><span className="absolute -inset-y-0.5 left-[34px] w-0.5 bg-[#505153]" /></Slider>
        <span className="flex-1 text-right">100.0</span>
        <IconBtn label="缩小" size="w-[15px] h-3.5">{magnifier(<path d="M4.500 7h5" stroke="#111" strokeWidth="1.500" />)}</IconBtn>
        <IconBtn label="放大" size="w-[15px] h-3.5">{magnifier(<path d="M4.500 7h5M7 4.500v5" stroke="#111" strokeWidth="1.500" />)}</IconBtn>
        <IconBtn label="100%" size="w-4 h-3.5" className="mr-1">{fitBox}</IconBtn>
        <IconBtn label="适合导航器" size="w-4 h-3.5"><path d="M0 1h10v8H0zM6 6h10v9H6z" fill="#fff" stroke="#222" /><path d="M5 3l8 9M5 3v4M13 12V8" stroke="#111" strokeWidth="1.600" /></IconBtn>
        <IconBtn label="适合屏幕" size="w-4 h-3.5"><path d="M.5 1.500h15v13H.5z" fill="#fff" stroke="#222" strokeWidth="1.500" /><path d="M3 4l9 8" stroke="#111" strokeWidth="2" /></IconBtn>
      </div>
      <div className="flex items-center">
        <Slider label="导航器旋转" value={50} className="h-[11px] w-[62px] border border-[#444]"><Wedge rotate /><span className="absolute -inset-y-0.5 left-[30px] w-0.5 bg-[#505153]" /></Slider>
        <span className="flex-1 text-right">0.0</span>
        <IconBtn label="左旋转" size="w-[15px] h-3.5">{rotL}</IconBtn>
        <IconBtn label="右旋转" size="w-[15px] h-3.5">{rotR}</IconBtn>
        <IconBtn label="重置旋转" size="w-4 h-3.5" className="mr-1">{gear('#555')}</IconBtn>
        <IconBtn label="左右反转" size="w-4 h-3.5"><path d="M2 7q1-5 6-5t6 5M11 5.500l3 2 1.500-3.500M8 6v10" stroke="#111" strokeWidth="1.700" /><path d="M1 8l5 4-5 3.500z" fill="#fff" /><path d="M15 8.500l-5 4 5 3z" fill="#333" /></IconBtn>
        <IconBtn label="上下反转" size="w-4 h-3.5"><path d="M7 2Q2 3 2 8t5 6M7 0v5" stroke="#111" strokeWidth="1.900" /><path d="M5 8h10" stroke="#111" strokeDasharray="2 1" /><path d="M11 2l3 4.500H8z" fill="#333" /><path d="M11 10l4 5H7z" fill="#fff" /></IconBtn>
      </div>
    </div>
  </section>
);

const LayerProperty = () => (
  <section className="mt-px flex h-[133px] border border-[#505153]">
    <div className="flex-1 px-1.5 pt-0.5 text-white">
      <h2 className="text-[9px] leading-[12px] font-medium">效果</h2>
      <div className="mr-1 ml-auto flex h-4 w-fit items-center gap-1 bg-[#6c6d71] pl-1">
        <IconBtn label="边界效果" size="w-3.5 h-3.5"><circle cx="8" cy="8" r="5" fill="#111" stroke="#fff" strokeWidth="2.600" /></IconBtn>
        <IconBtn label="网点" size="w-3.5 h-3.5"><Checks x={1} y={1} cols={7} rows={7} s={2} a="#888" b="#222" /></IconBtn>
        <IconBtn label="图层颜色" size="w-3.5 h-3.5"><path d="M5 5h10v10H5z" fill="#fff" /><path d="M1.500 1.500h11v11h-11z" fill="#55b5f8" /></IconBtn>
        <Spin label="效果切换" />
      </div>
      <h2 className="text-[9px] leading-[12px] font-medium">颜色模式</h2>
      <div className="mt-0.5 ml-1.5 flex h-4 w-[116px] items-center gap-1 border-b border-[#606164] bg-linear-to-b from-[#6b6c70] to-[#747579] pl-9">
        <Svg className="h-3.5 w-3.5" box="0 0 15 15"><path d="M0 0h5v15H0z" fill="#f7716e" /><path d="M5 0h5v15H5z" fill="#63a8f7" /><path d="M10 0h5v15h-5z" fill="#82ef70" /></Svg>
        <select aria-label="颜色模式" className="flex-1 appearance-none bg-transparent text-[9px] font-medium outline-none">
          <option>彩色</option>
          <option>灰度</option>
          <option>黑白</option>
        </select>
        <Svg className="h-3 w-2.5" box="3 1 10 14">{upDown}</Svg>
      </div>
    </div>
    <VBar className="w-2.5" />
  </section>
);

const eye = <><path d="M1 8q7-6 14 0-7 6-14 0z" fill="#f5f5f5" stroke="#111" strokeWidth="1" /><circle cx="8" cy="8" r="3" fill="#111" /><path d="M1 7q7-6 14 0" stroke="#111" strokeWidth="1.500" /></>;

const Layers = () => (
  <section className="flex flex-1 flex-col pl-0.5">
    <div className="flex h-4 items-center bg-[#717276] pr-1 text-[9px] font-medium text-white">
      <select aria-label="混合模式" className="min-w-0 flex-1 appearance-none bg-transparent pl-7 outline-none">
        <option>正常</option>
        <option>正片叠底</option>
        <option>滤色</option>
      </select>
      <Svg className="mr-1.5 h-3 w-2.5" box="3 1 10 14">{upDown}</Svg>
      <Slider label="图层不透明度" value={100} className="h-2 w-14 border border-[#555]">
        <Svg className="h-full w-full" box="0 0 54 6" stretch><Checks x={0} y={0} cols={18} rows={2} s={3} a="#f2f2f2" b="#c8c8c8" /></Svg>
      </Slider>
      <span className="w-[22px] text-right">100</span>
      <Spin label="不透明度增减" />
    </div>
    <div className="flex h-[18px] items-center justify-between pr-1">
      <IconBtn label="调色板颜色"><path d="M1.500 1.500h13v13h-13z" fill="#707175" stroke="#222" strokeWidth="1.200" /></IconBtn>
      <Spin label="调色板" />
      <IconBtn label="剪贴蒙版"><ellipse cx="8" cy="9" rx="7.500" ry="5" fill="#777" stroke="#222" /><ellipse cx="8" cy="6.500" rx="7" ry="3" fill="#222" stroke="#ccc" strokeWidth=".8" /></IconBtn>
      <IconBtn label="参照图层" size="w-3.5 h-4"><path d="M6 4h4l2 11H4zM5 1h6v3H5z" fill="#ddd" stroke="#333" strokeWidth=".8" /><path d="M1 1l3 1.500L1 4zM15 1l-3 1.500L15 4z" fill="#eee" /></IconBtn>
      <IconBtn label="草稿图层" size="w-3.5 h-4"><path d="M4.500 0H8v10H4.500z" fill="#28b8e8" /><path d="M8 0h3.500v10H8z" fill="#197db0" /><path d="M4.500 10h7L8 16z" fill="#f1d84a" /></IconBtn>
      <IconBtn label="锁定图层" size="w-3.5 h-4"><path d="M4.500 7V4.500q0-3 3.500-3t3.500 3V7" stroke="#333" strokeWidth="1.800" /><path d="M2.500 7h11v8h-11z" fill="#555" stroke="#222" /></IconBtn>
      <IconBtn label="锁定透明像素"><path d="M3.500 6V3.500q0-2.500 2.500-2.500t2.500 2.500V6" stroke="#eee" strokeWidth="1.500" /><path d="M1 6h9v6H1z" fill="#eee" stroke="#333" /><path d="M8 8h4v4H8zM12 12h4v4h-4z" fill="#fff" /></IconBtn>
      <IconBtn label="蒙版有效" className="w-[22px] bg-[#808185]"><path d="M2 3h8v8H2z" fill="#999a9d" /><path d="M9 10l4 4M13 10l-4 4M14 3l1.500 2h-3zM14 9l1.500-2h-3z" stroke="#5b5c5f" strokeWidth="1.200" /></IconBtn>
      <IconBtn label="尺子显示" className="w-[22px] bg-[#808185]"><path d="M2 3h10L2 13z" stroke="#5b5c5f" strokeWidth="1.500" /><path d="M9 10l4 4M13 10l-4 4" stroke="#5b5c5f" strokeWidth="1.200" /></IconBtn>
      <IconBtn label="图层颜色" size="w-3.5 h-4"><path d="M6 6h8v8H6z" fill="#fff" /><path d="M2 2h8.500v8.500H2z" fill="#338cf5" stroke="#eee" strokeWidth=".6" /></IconBtn>
      <Spin label="图层颜色切换" />
    </div>
    <div className="flex h-[18px] items-center border-b border-[#55565a] pr-1">
      <IconBtn label="图层面板显示" size="w-3.5 h-4">{stack}</IconBtn>
      <span className="flex-1" />
      <IconBtn label="新建点阵图层">{page}</IconBtn>
      <IconBtn label="新建矢量图层">{page}<circle cx="12.500" cy="12" r="3" fill="#eee" stroke="#333" /></IconBtn>
      <IconBtn label="新建文件夹"><path d="M1 4V2.500h5L7 4h6v8H1z" fill="#aaa" stroke="#444" /><path d="M7 6h8v6l-2.500 3H7z" fill="#fff" stroke="#333" strokeWidth=".7" /></IconBtn>
      <IconBtn label="向下复制"><path d="M3 6q5-3 10 0M3 9q5-3 10 0M8 4v7l-3-2M8 11l3-2" stroke="#55565a" strokeWidth="1.500" /></IconBtn>
      <IconBtn label="与下一图层组合"><path d="M2 6q6-6 12 0l-2 5q-4 3-8 0z" fill="#eee" stroke="#222" /><path d="M8 2v9M5 8l3 4 3-4z" fill="#111" stroke="#111" strokeWidth="1.300" /></IconBtn>
      <IconBtn label="创建图层蒙版"><path d="M.5 3h15v10H.5z" fill="#333" stroke="#888" /><circle cx="8" cy="8" r="3.500" fill="#fff" /></IconBtn>
      <IconBtn label="应用蒙版"><path d="M3 2v11h4M6 4h5v4H6zM8 10h5v4H8z" stroke="#55565a" strokeWidth="1.500" /></IconBtn>
      <IconBtn label="删除图层">{trash}</IconBtn>
    </div>
    <div className="flex flex-1">
      <ul className="flex-1 border-l border-[#4a4b4d] text-[9px] leading-[10px] font-medium text-white">
        <li className="flex h-[26px] border-b border-[#4a4b4d]">
          <IconBtn label="显示图层 1" className="w-[15px] border-r border-[#4a4b4d]" size="w-2.5 h-2.5">{eye}</IconBtn>
          <IconBtn label="编辑图层 1" className="w-[14px] border-r border-[#4a4b4d]" size="w-3 h-3"><path d="M14 1l1 2-7 7-2-2zM6 9l2 1.500-3 3-3.500 1.500L3 12z" fill="#111" stroke="#ddd" strokeWidth=".6" /></IconBtn>
          <button className="flex flex-1 items-center gap-0.5 border-l-2 border-[#506570] bg-linear-to-b from-[#7494a3] to-[#65889a] pl-0.5 text-left">
            <Svg className="h-[21px] w-[27px] border border-[#222]" box="0 0 27 21" stretch><Checks x={0} y={0} cols={9} rows={7} s={3} b="#cfcfcf" /></Svg>
            <span>100 %  正常<br />图层 1</span>
          </button>
        </li>
        <li className="flex h-[26px] border-b border-[#4a4b4d]">
          <IconBtn label="显示纸张" className="w-[15px] border-r border-[#4a4b4d]" size="w-2.5 h-2.5">{eye}</IconBtn>
          <span className="w-[14px] border-r border-[#4a4b4d]" />
          <button className="flex flex-1 items-center gap-0.5 pl-1 text-left">
            <span className="h-[21px] w-[27px] border border-[#222] bg-white" />
            <Svg className="ml-0.5 h-4 w-4 self-start"><path d="M.5.5h15v15H.5z" fill="#bbb" stroke="#333" /><path d="M3 2.500h6.500L13 6v8H3zM9.500 2.500V6H13" fill="#fff" stroke="#333" /></Svg>
            <span className="self-end pb-0.5">纸张</span>
          </button>
        </li>
      </ul>
      <VBar className="w-2.5" />
    </div>
  </section>
);

const RightDock = () => (
  <aside className="flex w-[186px] shrink-0 flex-col border-r-2 border-b-4 border-r-[#626366] border-b-[#4c4c4e] bg-[#77787c]">
    <DockHead><span className="w-0.5" /><Grip /><span className="flex-1" /><Chevrons d="r" label="折叠" /><span className="w-1.5" /><Chevrons d="rr" label="全部折叠" /></DockHead>
    <TabBar>
      <Tab on label="导航器" icon={<><path d="M6 6h9v9H6z" fill="#fff" /><path d="M2 3h10v8H2z" fill="#fff" stroke="#e01818" strokeWidth="2.400" /></>} className="w-12 gap-1" />
      <Tab className="w-[21px] justify-center" name="子视图" icon={<path d="M1 3h14v8H9l-3 3v-3H1z" fill="#999" stroke="#444" />} />
      <Tab className="w-[21px] justify-center" name="素材" icon={<><circle cx="9" cy="6" r="4" stroke="#999" strokeWidth="2" /><path d="M1 10h8v4H1z" fill="#999" /></>} />
      <Tab className="w-[21px] justify-center" name="信息" icon={<><circle cx="8" cy="8" r="6.500" fill="#444" /><path d="M8 3v2M8 7v6" stroke="#bbb" strokeWidth="2.500" /></>} />
    </TabBar>
    <Navigator />
    <TabBar>
      <Tab on label="图层属性" icon={<><path d="M1 7l4 4L15 0 6 15z" fill="#e02020" /><path d="M2 14.500h12" stroke="#111" strokeWidth="2" /></>} />
      <Tab label="图层搜索" icon={<path d="M2 4q6-4 12 0M2 8q6-4 12 0M2 12q6-4 12 0" stroke="#999" strokeWidth="1.500" />} />
      <Tab label="动画胶片" className="flex-1" icon={<path d="M8 3l5 11H3z" fill="#999" />} />
    </TabBar>
    <LayerProperty />
    <TabBar>
      <Tab on label="图层" icon={stack} />
      <Tab label="历史记录" icon={<><path d="M1 1h14v14H1z" fill="#ccc" /><path d="M4 9a3 3 0 1 1 4 0M12 9a3 3 0 1 1-3 3M3 4l2 3" stroke="#222" strokeWidth="2" /></>} />
      <Tab label="自动动作" icon={<path d="M1 13L7 4l2 8 6-9" stroke="#555" strokeWidth="2" strokeDasharray="2 1" />} />
    </TabBar>
    <Layers />
  </aside>
);

export default function App() {
  return (
    <div className="relative flex h-screen flex-col overflow-hidden bg-[#47474a] font-['Roboto','Noto_Sans_CJK_SC',sans-serif] text-white">
      <div className="flex min-h-0 flex-1">
        <ToolColumn />
        <LeftDock />
        <Center />
        <MaterialStrip />
        <RightDock />
      </div>
      <div className="absolute right-3 bottom-2.5 flex items-center gap-2.5 drop-shadow-sm">
        <span className="flex h-8 w-8 items-center justify-center rounded-full bg-white text-[22px] leading-none font-medium text-[#77787c]">值</span>
        <span className="text-[23px] leading-8 font-medium">什么值得买</span>
      </div>
    </div>
  );
}
